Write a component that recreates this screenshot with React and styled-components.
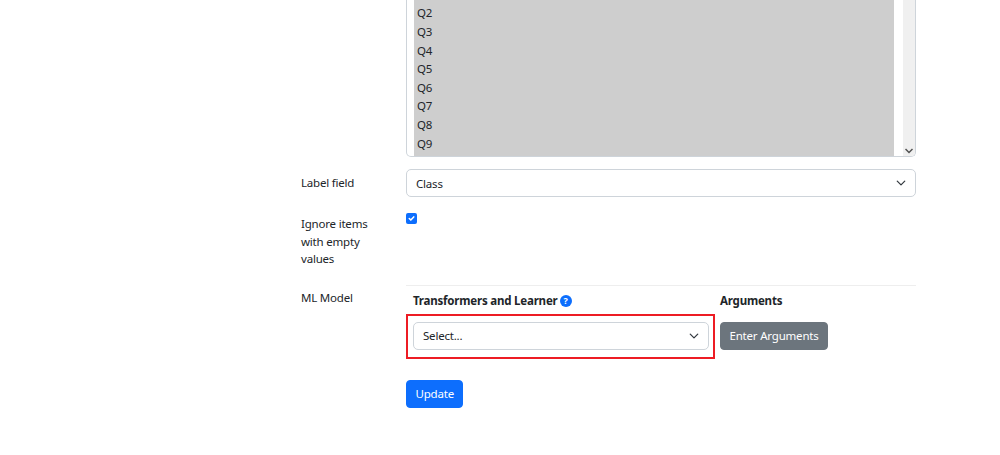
import React from "react";
import styled, { createGlobalStyle } from "styled-components";

const Global = createGlobalStyle`
  html, body { margin: 0; padding: 0; background: #fff; height: 455px; overflow: hidden; }
  body { font-family: "Noto Sans", "Open Sans", sans-serif; font-size: 11.5px; letter-spacing: -0.2px; color: #212529; }
`;

const Page = styled.div`
  width: 615px;
  margin-left: 301px;
  display: flex;
  flex-direction: column;
`;
const Row = styled.div`
  display: grid;
  grid-template-columns: 105px 510px;
  margin-top: ${p => p.$top || 0}px;
`;
const Label = styled.div`
  line-height: 17.5px;
  color: #212529;
  padding-top: ${p => p.$pad || 0}px;
  width: 80px;
`;
const ListBox = styled.div`
  height: 157px;
  box-sizing: border-box;
  border: 1px solid #ced4da;
  border-top: 0;
  border-radius: 0 0 5px 5px;
  display: flex;
  padding-left: 7px;
  overflow: hidden;
`;
const Options = styled.div`
  width: 481px;
  background: #cecece;
  padding: 4.4px 0 0 3px;
  box-sizing: border-box;
`;
const Option = styled.div`
  height: 18.6px;
  line-height: 18.6px;
  color: #212529;
`;
const Scrollbar = styled.div`
  width: 12px;
  margin-left: 9px;
  background: #f0f0f0;
  display: flex;
  align-items: flex-end;
  justify-content: center;
  padding-bottom: 2px;
  box-sizing: border-box;
`;
const SelectBox = styled.div`
  height: 28px;
  box-sizing: border-box;
  border: 1px solid #ced4da;
  border-radius: 5px;
  display: flex;
  align-items: center;
  justify-content: space-between;
  padding: 0 9px;
  color: #212529;
  background: #fff;
`;
const Check = styled.div`
  width: 11px;
  height: 11px;
  margin-top: 2px;
  background: #0d6efd;
  border-radius: 2px;
  display: flex;
  align-items: center;
  justify-content: center;
`;
const Divider = styled.div`
  height: 1px;
  background: #eeeeee;
`;
const ModelGrid = styled.div`
  display: grid;
  grid-template-columns: 307px 203px;
`;
const Heading = styled.div`
  font-weight: 700;
  line-height: 18px;
  padding: 2px 0 0 7px;
  color: #212529;
  display: flex;
  align-items: center;
  gap: 2px;
  height: 28px;
  box-sizing: border-box;
`;
const HelpIcon = styled.span`
  width: 12px;
  height: 12px;
  border-radius: 50%;
  background: #0d6efd;
  color: #fff;
  font-size: 9px;
  line-height: 12px;
  text-align: center;
  font-weight: 700;
`;
const Highlight = styled.div`
  width: 309px;
  height: 45px;
  margin-right: -2px;
  box-sizing: border-box;
  border: 2px solid #ed1c24;
  padding: 6px 4px 6px 5px;
`;
const Cell = styled.div`
  padding: 8px 0 0 7px;
`;
const Button = styled.button`
  height: 28px;
  border: 1px solid ${p => p.$bg};
  border-radius: 4px;
  background: ${p => p.$bg};
  color: #fff;
  font-family: inherit;
  font-size: inherit;
  letter-spacing: inherit;
  padding: 0 8.5px;
  display: block;
`;
const Actions = styled.div`
  margin: 21px 0 0 105px;
`;
const Chevron = () => (
  <svg width="10" height="10" viewBox="0 0 16 16" fill="none" stroke="#343a40" strokeWidth="2" strokeLinecap="round" strokeLinejoin="round">
    <path d="M2 5l6 6 6-6" />
  </svg>
);

export default function App() {
  return (
    <>
      <Global />
      <Page>
        <Row>
          <span />
          <ListBox>
            <Options>
              {["Q2", "Q3", "Q4", "Q5", "Q6", "Q7", "Q8", "Q9"].map(q => <Option key={q}>{q}</Option>)}
            </Options>
            <Scrollbar>
              <svg width="8" height="6" viewBox="0 0 8 6" fill="none" stroke="#505050" strokeWidth="1.5"><path d="M0.5 1l3.5 3.5L7.5 1" /></svg>
            </Scrollbar>
          </ListBox>
        </Row>
        <Row $top={12}>
          <Label $pad={5}>Label field</Label>
          <SelectBox>Class<Chevron /></SelectBox>
        </Row>
        <Row $top={14}>
          <Label $pad={4}>Ignore items with empty values</Label>
          <Check>
            <svg width="9" height="9" viewBox="0 0 20 20" fill="none" stroke="#fff" strokeWidth="3.4" strokeLinecap="round" strokeLinejoin="round"><path d="M5 10l3.5 3.5L15 6.5" /></svg>
          </Check>
        </Row>
        <Row $top={17}>
          <Label $pad={4}>ML Model</Label>
          <div>
            <Divider />
            <ModelGrid>
              <Heading>Transformers and Learner <HelpIcon>?</HelpIcon></Heading>
              <Heading>Arguments</Heading>
              <Highlight><SelectBox>Select...<Chevron /></SelectBox></Highlight>
              <Cell><Button $bg="#6c757d">Enter Arguments</Button></Cell>
            </ModelGrid>
          </div>
        </Row>
        <Actions><Button $bg="#0d6efd">Update</Button></Actions>
      </Page>
    </>
  );
}
